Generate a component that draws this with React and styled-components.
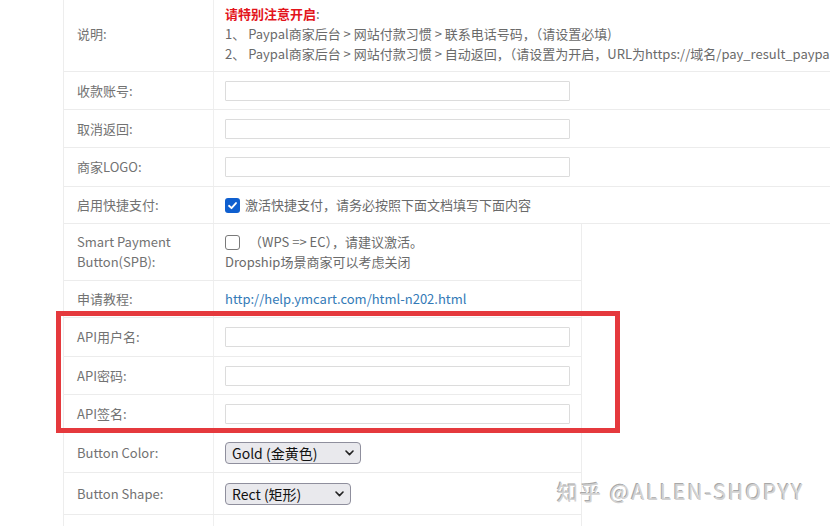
import React from "react";
import styled, { createGlobalStyle } from "styled-components";

const Global = createGlobalStyle`
  html, body { margin: 0; padding: 0; background: #fff; }
  body { font-family: "Noto Sans CJK SC", "Open Sans", sans-serif; }
`;

const Page = styled.div`
  position: relative;
  width: 830px;
  height: 526px;
  overflow: hidden;
  padding-left: 63px;
  box-sizing: border-box;
  background: #fff;
`;

const Section = styled.div`
  width: ${(p) => p.$width};
  margin-top: ${(p) => p.$offset || 0};
  border-left: 1px solid #ededed;
  border-right: ${(p) => (p.$closed ? "1px solid #ededed" : "none")};
  box-sizing: border-box;
`;

const Row = styled.div`
  display: grid;
  grid-template-columns: 150px 1fr;
  height: ${(p) => p.$h}px;
  border-bottom: 1px solid #ececec;
  box-sizing: border-box;
`;

const Label = styled.div`
  display: flex;
  align-items: center;
  padding-left: 13px;
  border-right: 1px solid #efefef;
  font-size: 13px;
  line-height: 20px;
  color: #727272;
`;

const Value = styled.div`
  display: flex;
  flex-direction: column;
  justify-content: center;
  padding-left: 11px;
  font-size: 13px;
  line-height: 20px;
  color: #6a6a6a;
  white-space: nowrap;
  overflow: hidden;
`;

const Line = styled.div`
  display: flex;
  align-items: center;
`;

const Alert = styled.span`
  color: #e3141b;
  font-weight: 700;
`;

const TextInput = styled.input`
  width: 345px;
  height: 20px;
  box-sizing: border-box;
  border: 1px solid #dcdcdc;
  border-radius: 1px;
  background: #fff;
  outline: none;
  padding: 0 4px;
`;

const Box = styled.span`
  display: inline-flex;
  align-items: center;
  justify-content: center;
  width: 15px;
  height: 15px;
  box-sizing: border-box;
  border-radius: 3px;
  margin-right: ${(p) => p.$gap}px;
  background: ${(p) => (p.$on ? "#0f5fcf" : "#fff")};
  border: ${(p) => (p.$on ? "none" : "1.5px solid #7a7a7a")};
`;

const Link = styled.a`
  color: #337ab7;
  text-decoration: none;
  font-size: 13px;
`;

const SelectWrap = styled.div`
  position: relative;
  width: ${(p) => p.$w}px;
  height: 22px;
`;

const Select = styled.select`
  appearance: none;
  width: 100%;
  height: 22px;
  box-sizing: border-box;
  border: 1px solid #8f8f9d;
  border-radius: 4px;
  background: #e9e9ed;
  color: #111;
  font-family: "Noto Sans CJK SC", "Open Sans", sans-serif;
  font-size: 14px;
  line-height: 20px;
  padding: 0 0 0 6px;
  outline: none;
`;

const Chevron = styled.svg`
  position: absolute;
  right: 7px;
  top: 8px;
  pointer-events: none;
`;

const Highlight = styled.div`
  position: relative;
  &::after {
    content: "";
    position: absolute;
    left: -8px;
    right: -39px;
    top: -7px;
    bottom: 0px;
    border: 5px solid #e5393d;
    pointer-events: none;
  }
`;

const Watermark = styled.div`
  position: absolute;
  left: 557px;
  top: 476px;
  font-family: "Noto Sans CJK SC", "Liberation Sans", sans-serif;
  font-size: 21px;
  letter-spacing: 2px;
  color: #d2d2d2;
  text-shadow: 1px 1px 0 #fff, -1px -1px 0 #a8a8a8;
  white-space: nowrap;
`;

function Check({ on, gap }) {
  return (
    <Box $on={on} $gap={gap}>
      {on && (
        <svg width="11" height="11" viewBox="0 0 12 12">
          <path d="M2.2 6.3 L4.9 8.9 L9.8 3.3" fill="none" stroke="#fff" strokeWidth="2" strokeLinecap="round" strokeLinejoin="round" />
        </svg>
      )}
    </Box>
  );
}

function Dropdown({ w, value }) {
  return (
    <SelectWrap $w={w}>
      <Select defaultValue={value}>
        <option>{value}</option>
      </Select>
      <Chevron width="9" height="6" viewBox="0 0 9 6">
        <path d="M1 1 L4.5 4.6 L8 1" fill="none" stroke="#222" strokeWidth="1.6" strokeLinecap="round" strokeLinejoin="round" />
      </Chevron>
    </SelectWrap>
  );
}

export default function App() {
  return (
    <>
      <Global />
      <Page>
        <Section $width="800px" $offset="-3px">
          <Row $h={75}>
            <Label>说明:</Label>
            <Value>
              <Line>
                <Alert>请特别注意开启</Alert>:
              </Line>
              <Line>1、 Paypal商家后台 &gt; 网站付款习惯 &gt; 联系电话号码，（请设置必填)</Line>
              <Line>2、 Paypal商家后台 &gt; 网站付款习惯 &gt; 自动返回，（请设置为开启，URL为https://域名/pay_result_paypal.html）</Line>
            </Value>
          </Row>
          <Row $h={38}>
            <Label>收款账号:</Label>
            <Value><TextInput /></Value>
          </Row>
          <Row $h={38}>
            <Label>取消返回:</Label>
            <Value><TextInput /></Value>
          </Row>
          <Row $h={39}>
            <Label>商家LOGO:</Label>
            <Value><TextInput /></Value>
          </Row>
          <Row $h={37}>
            <Label>启用快捷支付:</Label>
            <Value>
              <Line><Check on gap={5} />激活快捷支付，请务必按照下面文档填写下面内容</Line>
            </Value>
          </Row>
        </Section>
        <Section $width="519px" $closed>
          <Row $h={57}>
            <Label>Smart Payment<br />Button(SPB):</Label>
            <Value>
              <Line><Check gap={9} />（WPS =&gt; EC），请建议激活。</Line>
              <Line>Dropship场景商家可以考虑关闭</Line>
            </Value>
          </Row>
          <Row $h={37}>
            <Label>申请教程:</Label>
            <Value>
              <Line><Link href="#">http://help.ymcart.com/html-n202.html</Link></Line>
            </Value>
          </Row>
          <Highlight>
            <Row $h={39}>
              <Label>API用户名:</Label>
              <Value><TextInput /></Value>
            </Row>
            <Row $h={38}>
              <Label>API密码:</Label>
              <Value><TextInput /></Value>
            </Row>
            <Row $h={38}>
              <Label>API签名:</Label>
              <Value><TextInput /></Value>
            </Row>
          </Highlight>
          <Row $h={40}>
            <Label>Button Color:</Label>
            <Value><Dropdown w={136} value="Gold (金黄色)" /></Value>
          </Row>
          <Row $h={42}>
            <Label>Button Shape:</Label>
            <Value><Dropdown w={126} value="Rect (矩形)" /></Value>
          </Row>
          <Row $h={40}>
            <Label></Label>
            <Value></Value>
          </Row>
        </Section>
        <Watermark>知乎 @ALLEN-SHOPYY</Watermark>
      </Page>
    </>
  );
}
